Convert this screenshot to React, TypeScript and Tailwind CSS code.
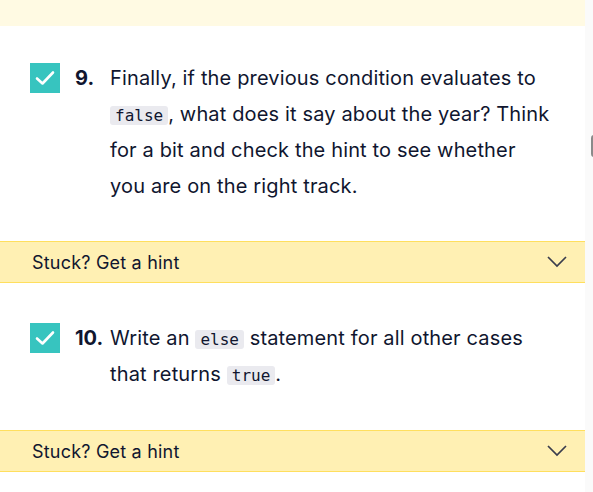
import React from "react";

const Check = () => (
  <div className="w-[30px] h-[30px] bg-[#37c4bf] flex items-center justify-center shrink-0 mt-[3px]">
    <svg width="20" height="16" viewBox="0 0 20 16" fill="none">
      <path d="M2 8.5 L7.5 13.5 L18 2.5" stroke="white" strokeWidth="2.6" strokeLinecap="round" strokeLinejoin="round" />
    </svg>
  </div>
);

const Code = ({ children }: { children: React.ReactNode }) => (
  <code className="inline-block leading-[19px] tracking-normal bg-[#eaeaef] rounded-[3px] px-[5px] text-[16px] text-[#10162f] font-['DejaVu_Sans_Mono',monospace]">
    {children}
  </code>
);

const Hint = () => (
  <div className="h-[42px] bg-[#fff0b3] border-y border-[#ffdf5e] flex items-center justify-between pl-[32px] pr-[18px]">
    <span className="text-[18px] tracking-[0.2px] text-[#10162f]">Stuck? Get a hint</span>
    <svg width="20" height="12" viewBox="0 0 20 12" fill="none">
      <path d="M1 1 L10 10 L19 1" stroke="#3a3d4d" strokeWidth="1.7" />
    </svg>
  </div>
);

export default function App() {
  return (
    <div className="w-[593px] h-[492px] flex bg-white overflow-hidden font-['Inter',sans-serif] text-[#10162f]">
      <div className="w-[585px] flex flex-col">
        <div className="h-[26px] bg-[#fffae3]" />
        <div className="flex pl-[30px] pr-[30px] mt-[34px]">
          <Check />
          <div className="w-[35px] ml-[15px] font-bold text-[20px] leading-[36px]">9.</div>
          <p className="text-[20px] tracking-[0.15px] leading-[36px] w-[445px]">
            Finally, if the previous condition evaluates to <Code>false</Code>, what does it say about the year? Think for a bit and check the hint to see whether you are on the right track.
          </p>
        </div>
        <div className="mt-[37px]">
          <Hint />
        </div>
        <div className="flex pl-[30px] pr-[30px] mt-[37px]">
          <Check />
          <div className="w-[35px] ml-[15px] font-bold text-[20px] leading-[36px]">10.</div>
          <p className="text-[20px] tracking-[0.15px] leading-[36px] w-[445px]">
            Write an <Code>else</Code> statement for all other cases that returns <Code>true</Code>.
          </p>
        </div>
        <div className="mt-[38px]">
          <Hint />
        </div>
      </div>
      <div className="w-[8px] bg-[#fafafa] relative">
        <div className="absolute left-[6px] top-[135px] w-[4px] h-[22px] rounded-l-[3px] bg-[#8a8a8a]" />
      </div>
    </div>
  );
}
